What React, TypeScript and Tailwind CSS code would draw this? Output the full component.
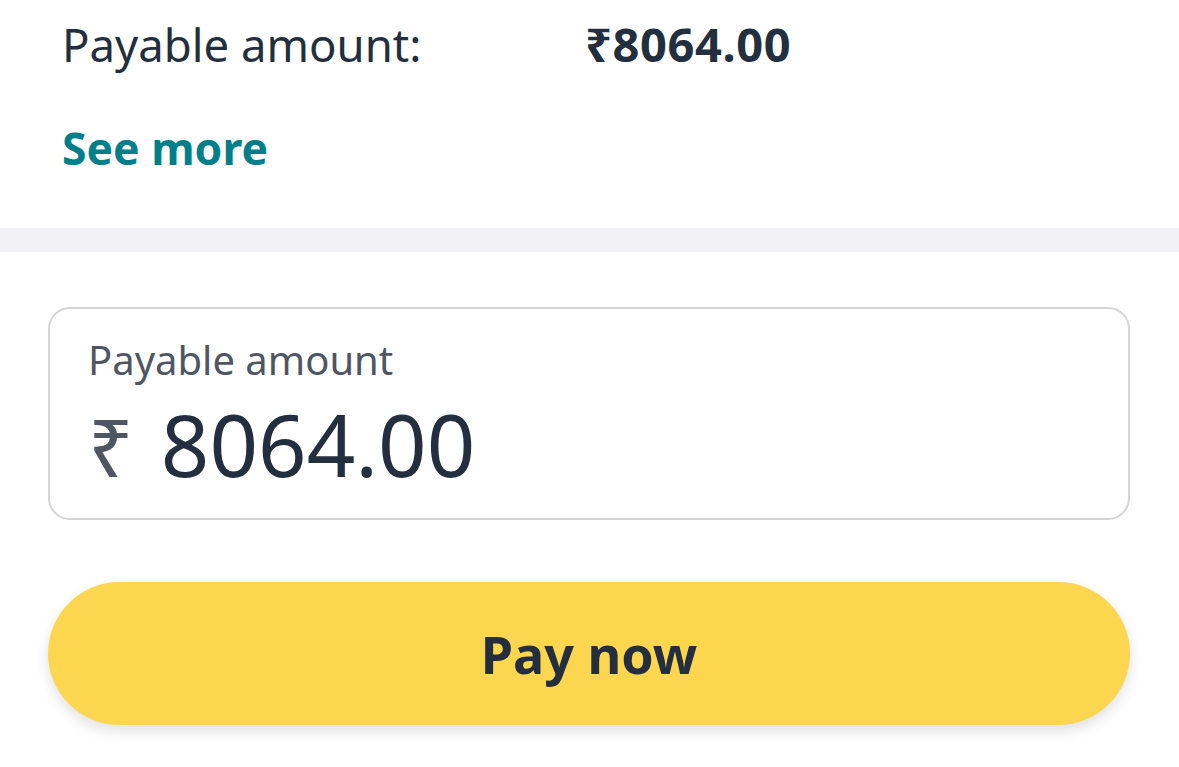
import React from "react";

// Resumo do pagamento + campo de valor + botão
export default function App() {
  const font = { fontFamily: '"Noto Sans", "DejaVu Sans", sans-serif' };

  return (
    <div className="w-[1179px] h-[767px] bg-white overflow-hidden text-[#232f3e]" style={font}>
      {/* Resumo */}
      <div className="px-[62px] pt-[14px] h-[228px]">
        <div className="flex items-center h-[60px]">
          <span className="w-[523px] text-[45.5px] leading-[60px]">Payable amount:</span>
          <span className="text-[47px] leading-[60px] font-bold tracking-[0.6px]">₹8064.00</span>
        </div>
        <div className="mt-[44px] text-[44.5px] leading-[60px] font-bold text-[#007e8a]">See more</div>
      </div>

      <div className="h-[24px] bg-[#f2f2f4]" />

      <div className="px-[48px] pt-[55px]">
        {/* Campo de valor */}
        <div className="w-[1082px] h-[213px] border-2 border-[#d5d5d5] rounded-[22px] pl-[38px] pt-[26px]">
          <div className="text-[40px] leading-[50px] text-[#4f5663]">Payable amount</div>
          <div className="flex items-baseline mt-[14px]">
            <span className="text-[80px] leading-[90px] text-[#4f5663] mr-[27px]">₹</span>
            <span className="text-[85px] leading-[90px]">8064.00</span>
          </div>
        </div>

        {/* Botão */}
        <button className="mt-[62px] w-[1082px] h-[143px] rounded-full bg-[#fdd64f] shadow-[0_6px_14px_rgba(0,0,0,0.12)] flex items-center justify-center">
          <span className="text-[52px] font-bold text-[#232f3e]">Pay now</span>
        </button>
      </div>
    </div>
  );
}
